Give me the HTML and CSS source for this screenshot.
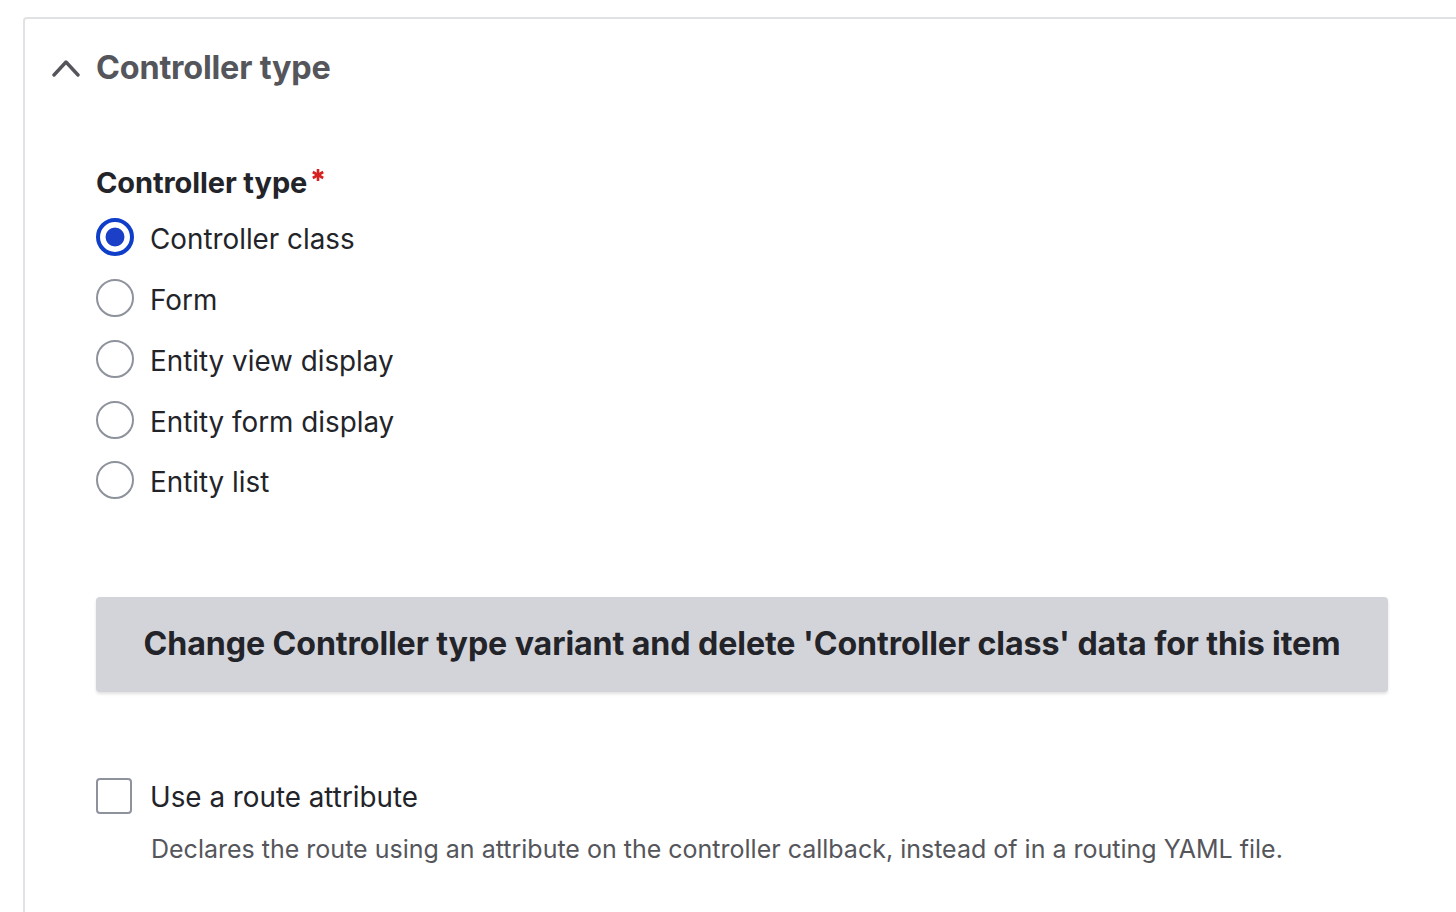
FILE: index.html
```html
<!DOCTYPE html>
<html lang="en">
<head>
<meta charset="utf-8">
<title>Controller type</title>
<link rel="stylesheet" href="styles.css">
</head>
<body>
<div class="card">
  <div class="summary">
    <svg class="chevron" width="28" height="20" viewBox="0 0 28 20" aria-hidden="true">
      <polyline points="2,17 14,4 26,17" fill="none" stroke="#55565b" stroke-width="3.4" stroke-linecap="round" stroke-linejoin="round"/>
    </svg>
    <h2 class="summary-title">Controller type</h2>
  </div>
  <div class="content">
    <div class="label">Controller type<svg class="req" width="12" height="12" viewBox="0 0 12 12" aria-label="required"><g stroke="#d72222" stroke-width="2.6"><line x1="6" y1="0" x2="6" y2="12"/><line x1="0.8" y1="3" x2="11.2" y2="9"/><line x1="0.8" y1="9" x2="11.2" y2="3"/></g></svg></div>
    <div class="radios">
      <label class="radio-row"><span class="radio checked"></span><span class="opt">Controller class</span></label>
      <label class="radio-row"><span class="radio"></span><span class="opt">Form</span></label>
      <label class="radio-row"><span class="radio"></span><span class="opt">Entity view display</span></label>
      <label class="radio-row"><span class="radio"></span><span class="opt">Entity form display</span></label>
      <label class="radio-row"><span class="radio"></span><span class="opt">Entity list</span></label>
    </div>
    <button class="btn" type="button">Change Controller type variant and delete 'Controller class' data for this item</button>
    <div class="check-row">
      <span class="checkbox"></span>
      <span class="opt">Use a route attribute</span>
    </div>
    <div class="desc">Declares the route using an attribute on the controller callback, instead of in a routing YAML file.</div>
  </div>
</div>
</body>
</html>
```

FILE: styles.css
```css
html, body {
  margin: 0;
  padding: 0;
  background: #ffffff;
  overflow: hidden;
}
body {
  font-family: Inter, "Liberation Sans", sans-serif;
  color: #232429;
  height: 912px;
}
.card {
  margin: 17px 0 0 23px;
  width: 1460px;
  height: 920px;
  border: 2px solid #e1e2e6;
  border-radius: 4px;
  box-sizing: border-box;
}
.summary {
  display: flex;
  align-items: center;
  height: 96px;
  padding-left: 27px;
}
.chevron {
  display: block;
  margin-top: 1px;
}
.summary-title {
  margin: 0 0 0 16px;
  font-size: 32.4px;
  font-weight: 700;
  color: #55565b;
  letter-spacing: -0.2px;
}
.content {
  padding-left: 71px;
  padding-top: 50px;
}
.label {
  font-size: 29px;
  font-weight: 700;
  color: #232429;
  line-height: 36px;
  letter-spacing: -0.1px;
}
.req {
  margin-left: 5px;
  vertical-align: 12px;
}
.radios {
  display: flex;
  flex-direction: column;
  margin-top: 6px;
}
.radio-row {
  display: flex;
  align-items: center;
  height: 60.75px;
}
.radio {
  width: 38px;
  height: 38px;
  border-radius: 50%;
  border: 2px solid #8e929c;
  box-sizing: border-box;
  background: #fff;
  flex: none;
}
.radio.checked {
  border: 4px solid #0f3ec9;
  background: radial-gradient(circle, #1c3fc7 0 9px, #ffffff 9.8px);
}
.opt {
  margin-left: 16px;
  font-size: 27.8px;
  line-height: 36px;
  color: #232429;
  position: relative;
  top: 2px;
}
.btn {
  display: block;
  margin-top: 86px;
  width: 1292px;
  height: 95px;
  border: 0;
  border-radius: 4px;
  background: #d3d4d9;
  box-shadow: 0 2px 3px rgba(0, 0, 0, 0.12);
  font-family: inherit;
  font-size: 32.2px;
  font-weight: 700;
  color: #232429;
  padding: 0 0 2px 0;
  letter-spacing: -0.1px;
}
.check-row {
  display: flex;
  align-items: center;
  margin-top: 86px;
  height: 36px;
}
.checkbox {
  width: 36px;
  height: 36px;
  box-sizing: border-box;
  border: 2px solid #8e929c;
  border-radius: 4px;
  flex: none;
}
.check-row .opt {
  margin-left: 18px;
  top: 1px;
}
.desc {
  margin: 19px 0 0 55px;
  font-size: 25px;
  line-height: 32px;
  color: #55565b;
}
```
